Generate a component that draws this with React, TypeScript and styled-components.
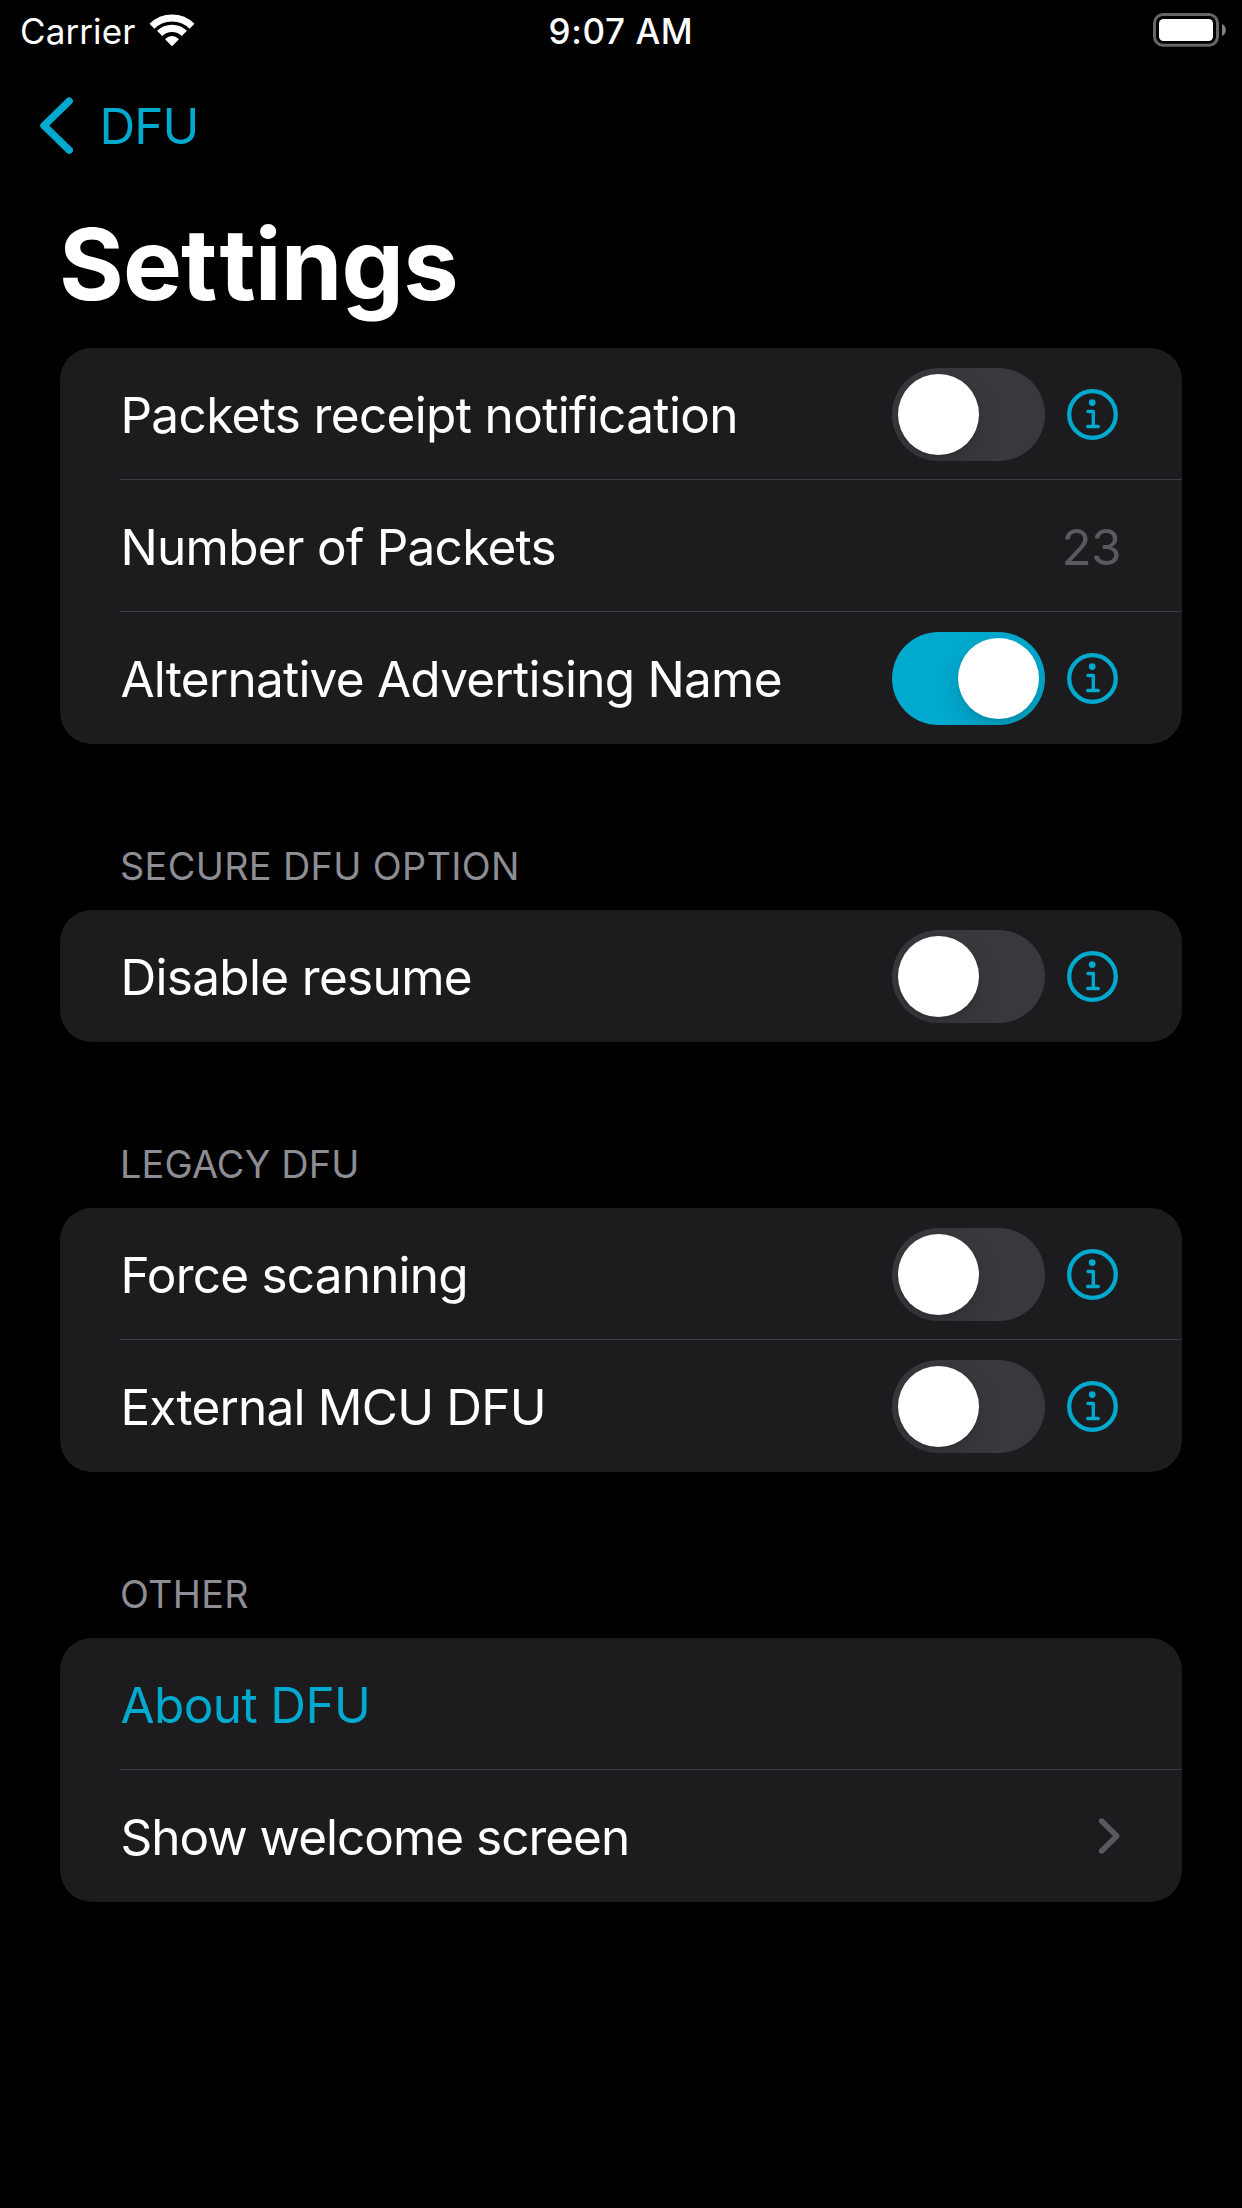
import React, { useState } from "react";
import styled, { createGlobalStyle } from "styled-components";

const ACCENT = "#00a9ce";

const GlobalStyle = createGlobalStyle`
  *, *::before, *::after { box-sizing: border-box; }
  body {
    margin: 0;
    background: #000;
    font-family: Inter, "Liberation Sans", sans-serif;
    color: #fff;
  }
`;

const Screen = styled.div`
  width: 1242px;
  height: 2208px;
  background: #000;
  overflow: hidden;
  display: flex;
  flex-direction: column;
`;

const StatusBar = styled.header`
  height: 60px;
  flex: none;
  display: grid;
  grid-template-columns: 1fr auto 1fr;
  align-items: start;
  padding: 0 16px;
  font-size: 35px;
  line-height: 62px;
`;

const CarrierGroup = styled.div`
  display: flex;
  gap: 13px;
  padding-left: 4px;
  svg { display: block; margin-top: 12px; }
`;

const Carrier = styled.span`
  letter-spacing: 0.1px;
`;

const Clock = styled.time`
  font-weight: 540;
  letter-spacing: 0.6px;
`;

const BatterySlot = styled.div`
  justify-self: end;
  padding-top: 13px;
  svg { display: block; }
`;

const NavBar = styled.nav`
  height: 132px;
  flex: none;
  display: flex;
  align-items: center;
  padding-left: 38px;
`;

const BackButton = styled.button`
  display: flex;
  align-items: center;
  gap: 21.5px;
  padding: 0;
  border: 0;
  background: none;
  color: ${ACCENT};
  font: inherit;
  font-size: 49.5px;
  line-height: 60px;
  letter-spacing: -1px;
  svg { display: block; }
`;

const Title = styled.h1`
  margin: 0;
  height: 156px;
  flex: none;
  padding: 12px 0 0 59px;
  font-size: 99px;
  line-height: 120px;
  font-weight: 700;
  letter-spacing: -0.9px;
`;

const LooseLetter = styled.span`
  letter-spacing: 2.2px;
`;

const Section = styled.section`
  width: 1122px;
  margin: 0 60px;
`;

const SectionHeader = styled.h2<{ $tracking: number }>`
  margin: 0;
  height: 166px;
  padding: 99px 60px 0;
  font-size: 37.8px;
  line-height: 46px;
  font-weight: 400;
  color: #8d8d93;
  letter-spacing: ${(p) => p.$tracking}px;
`;

const Card = styled.div`
  background: #1c1c1e;
  border-radius: 32px;
  overflow: hidden;
  padding-left: 60px;
`;

const Row = styled.div`
  height: 132px;
  display: flex;
  align-items: center;
  padding-right: 64px;
  border-bottom: 1px solid #3d3d41;
  &:last-child { border-bottom-color: transparent; }
`;

const Label = styled.span<{ $tracking: number; $accent?: boolean }>`
  flex: 1;
  font-size: 49.5px;
  line-height: 60px;
  padding: 3px 0 0 0.4px;
  white-space: nowrap;
  color: ${(p) => (p.$accent ? ACCENT : "#fff")};
  letter-spacing: ${(p) => p.$tracking}px;
`;

const Value = styled.span`
  font-size: 49.5px;
  line-height: 60px;
  padding-top: 3px;
  margin-right: -3px;
  letter-spacing: -0.6px;
  color: #5a5a5e;
`;

const Track = styled.button<{ $on: boolean }>`
  width: 153px;
  height: 93px;
  flex: none;
  display: flex;
  justify-content: ${(p) => (p.$on ? "flex-end" : "flex-start")};
  align-items: center;
  padding: 0 6px;
  margin-top: 1px;
  border: 0;
  border-radius: 47px;
  overflow: hidden;
  background: ${(p) => (p.$on ? ACCENT : "#39393d")};
`;

const Knob = styled.span`
  width: 81px;
  height: 81px;
  border-radius: 50%;
  background: #fff;
  box-shadow: 0 9px 24px rgba(0, 0, 0, 0.15), 0 3px 3px rgba(0, 0, 0, 0.06);
`;

const InfoButton = styled.button`
  display: block;
  flex: none;
  margin: 1px 0 0 22px;
  padding: 0;
  border: 0;
  background: none;
  color: ${ACCENT};
  svg { display: block; }
`;

const Disclosure = styled.svg`
  display: block;
  margin-right: -5px;
  color: #5a5a5e;
`;

const WifiIcon = () => (
  <svg width="48" height="35" viewBox="0 0 48 35" fill="none">
    <path d="M4 14.2 A28.5 28.5 0 0 1 44 14.2" stroke="#fff" strokeWidth="7.2" />
    <path d="M11.6 21.4 A17.6 17.6 0 0 1 36.4 21.4" stroke="#fff" strokeWidth="7.2" />
    <path
      d="M24 33.2 L18 27.2 A8.6 8.6 0 0 1 30 27.2 Z"
      fill="#fff"
      stroke="#fff"
      strokeWidth="1.4"
      strokeLinejoin="round"
    />
  </svg>
);

const BatteryIcon = () => (
  <svg width="73" height="34" viewBox="0 0 73 34">
    <rect x="1.5" y="1.5" width="63" height="30.7" rx="8.5" fill="none" stroke="#666" strokeWidth="3" />
    <rect x="6" y="6" width="54" height="22" rx="4.5" fill="#fff" />
    <path d="M69 11 C74.2 13 74.2 21 69 23 Z" fill="#808080" />
  </svg>
);

const BackIcon = () => (
  <svg width="40" height="60" viewBox="0 0 40 60" fill="none">
    <path
      d="M31.2 5.2 L6 29.6 L31.2 54.2"
      stroke="currentColor"
      strokeWidth="7.4"
      strokeLinecap="round"
      strokeLinejoin="round"
    />
  </svg>
);

const InfoIcon = () => (
  <svg width="51" height="51" viewBox="0 0 51 51" fill="none" stroke="currentColor">
    <circle cx="25.5" cy="25.5" r="23.3" strokeWidth="4.3" />
    <circle cx="25.2" cy="13.6" r="3.4" fill="currentColor" stroke="none" />
    <path
      d="M21 22.5 H26.3 V37.6 M20.7 37.6 H31.3"
      strokeWidth="3.5"
      strokeLinecap="round"
      strokeLinejoin="round"
    />
  </svg>
);

const ChevronIcon = () => (
  <Disclosure width="28" height="40" viewBox="0 0 28 40" fill="none">
    <path
      d="M6.6 5 L21.8 20 L6.6 35"
      stroke="currentColor"
      strokeWidth="5.4"
      strokeLinecap="round"
      strokeLinejoin="round"
    />
  </Disclosure>
);

interface ToggleRowProps {
  label: string;
  tracking: number;
  initial?: boolean;
}

function ToggleRow({ label, tracking, initial = false }: ToggleRowProps) {
  const [on, setOn] = useState(initial);
  return (
    <Row>
      <Label $tracking={tracking}>{label}</Label>
      <Track $on={on} role="switch" aria-checked={on} onClick={() => setOn(!on)}>
        <Knob />
      </Track>
      <InfoButton>
        <InfoIcon />
      </InfoButton>
    </Row>
  );
}

export default function App() {
  return (
    <>
      <GlobalStyle />
      <Screen>
        <StatusBar>
          <CarrierGroup>
            <Carrier>Carrier</Carrier>
            <WifiIcon />
          </CarrierGroup>
          <Clock>9:07 AM</Clock>
          <BatterySlot>
            <BatteryIcon />
          </BatterySlot>
        </StatusBar>
        <NavBar>
          <BackButton>
            <BackIcon />
            <span>DFU</span>
          </BackButton>
        </NavBar>
        <Title>
          Se<LooseLetter>t</LooseLetter>tings
        </Title>
        <Section>
          <Card>
            <ToggleRow label="Packets receipt notification" tracking={-0.65} />
            <Row>
              <Label $tracking={-0.73}>Number of Packets</Label>
              <Value>23</Value>
            </Row>
            <ToggleRow label="Alternative Advertising Name" tracking={-0.76} initial />
          </Card>
        </Section>
        <Section>
          <SectionHeader $tracking={0.36}>SECURE DFU OPTION</SectionHeader>
          <Card>
            <ToggleRow label="Disable resume" tracking={-0.67} />
          </Card>
        </Section>
        <Section>
          <SectionHeader $tracking={0.16}>LEGACY DFU</SectionHeader>
          <Card>
            <ToggleRow label="Force scanning" tracking={-0.8} />
            <ToggleRow label="External MCU DFU" tracking={-0.8} />
          </Card>
        </Section>
        <Section>
          <SectionHeader $tracking={0.3}>OTHER</SectionHeader>
          <Card>
            <Row>
              <Label $tracking={-0.6} $accent>About DFU</Label>
            </Row>
            <Row>
              <Label $tracking={-1.01}>Show welcome screen</Label>
              <ChevronIcon />
            </Row>
          </Card>
        </Section>
      </Screen>
    </>
  );
}
